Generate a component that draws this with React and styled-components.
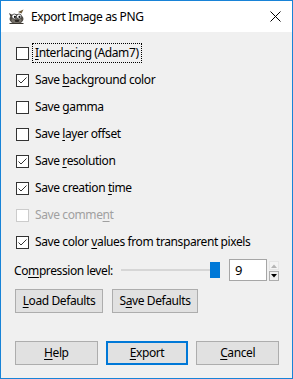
import React from "react";
import styled, { createGlobalStyle } from "styled-components";

const Global = createGlobalStyle`
  html, body { margin: 0; padding: 0; background: #fff; }
  body { font-family: "Noto Sans", "Segoe UI", sans-serif; font-size: 12px; letter-spacing: -0.4px; color: #000; }
  * { box-sizing: border-box; }
`;

const Window = styled.div`
  width: 293px;
  height: 379px;
  border: 1px solid #1883d7;
  background: #f0f0f0;
  display: flex;
  flex-direction: column;
`;

const TitleBar = styled.div`
  height: 31px;
  background: #fff;
  display: flex;
  align-items: center;
  padding: 0 10px 0 7px;
  flex: none;
`;

const TitleText = styled.div`
  margin-left: 6px;
  font-size: 12px;
  flex: 1;
  padding-bottom: 1px;
`;

const Close = styled.div`
  width: 12px;
  height: 12px;
  display: flex;
`;

const Body = styled.div`
  flex: 1;
  display: flex;
  flex-direction: column;
  padding: 10px 13px 13px 14px;
`;

const Options = styled.div`
  display: flex;
  flex-direction: column;
  gap: 5px;
`;

const Row = styled.label`
  height: 22px;
  display: flex;
  align-items: center;
  gap: 4px;
  color: ${p => (p.$disabled ? "#a0a0a0" : "#000")};
`;

const Box = styled.span`
  width: 13px;
  height: 13px;
  margin-left: 1px;
  border: 1px solid ${p => (p.$disabled ? "#cccccc" : "#333333")};
  background: #fff;
  display: flex;
  align-items: center;
  justify-content: center;
  flex: none;
`;

const Label = styled.span`
  padding: 1px 2px 2px 2px;
  outline: ${p => (p.$focus ? "1px dotted #000" : "none")};
  line-height: 15px;
`;

const Mn = styled.span`
  text-decoration: underline;
  text-underline-offset: 2px;
`;

const CompRow = styled.div`
  margin-top: 6px;
  height: 22px;
  display: flex;
  align-items: center;
`;

const CompLabel = styled.span`
  width: 107px;
  flex: none;
  margin-left: -1px;
`;

const Slider = styled.div`
  flex: 1;
  height: 16px;
  position: relative;
  display: flex;
  align-items: center;
  margin-right: 9px;
`;

const Track = styled.div`
  height: 2px;
  background: #d6d6d6;
  flex: 1;
`;

const Thumb = styled.div`
  position: absolute;
  right: 0;
  top: 0;
  width: 10px;
  height: 16px;
  background: #0078d7;
`;

const Spin = styled.div`
  display: flex;
  align-items: center;
  gap: 2px;
`;

const Entry = styled.div`
  width: 38px;
  height: 22px;
  border: 1px solid #a6a6a6;
  background: #fff;
  padding-left: 5px;
  display: flex;
  align-items: center;
  font-size: 13px;
`;

const Arrows = styled.div`
  display: flex;
  flex-direction: column;
  gap: 1px;
  padding-top: 2px;
`;

const ArrowBtn = styled.div`
  width: 10px;
  height: ${p => (p.$down ? "10px" : "9px")};
  border: 1px solid ${p => (p.$down ? "#adadad" : "#e6e6e6")};
  background: ${p => (p.$down ? "#f0f0f0" : "#f4f4f4")};
  display: flex;
  align-items: center;
  justify-content: center;
`;

const DefaultsRow = styled.div`
  margin-top: 8px;
  display: flex;
  gap: 9px;
`;

const Button = styled.div`
  height: 24px;
  width: ${p => p.$w || 83}px;
  background: #e1e1e1;
  border: ${p => (p.$default ? "2px solid #0078d7" : "1px solid #adadad")};
  display: flex;
  align-items: center;
  justify-content: center;
  padding-bottom: 1px;
`;

const Footer = styled.div`
  margin-top: auto;
  display: flex;
  gap: 8px;
`;

const Check = () => (
  <svg width="11" height="11" viewBox="0 0 11 11">
    <path d="M1.5 5.5 L4 8 L9.5 2.5" fill="none" stroke="#333" strokeWidth="1" />
  </svg>
);

const Wilber = () => (
  <svg width="17" height="16" viewBox="0 0 17 16">
    <path d="M10 3 L15.5 0.5 L13.5 4.5 Z" fill="#6b5a3a" />
    <path d="M1 4 L4.5 6 L3 9 Z" fill="#3f3b36" />
    <ellipse cx="8.5" cy="10" rx="7" ry="4.8" fill="#4e4a44" />
    <ellipse cx="8.5" cy="11.2" rx="5" ry="2.8" fill="#77726a" />
    <circle cx="6.3" cy="7.5" r="2.5" fill="#fff" stroke="#222" strokeWidth="0.7" />
    <circle cx="11" cy="7.5" r="2.5" fill="#fff" stroke="#222" strokeWidth="0.7" />
    <circle cx="6.9" cy="7.9" r="1.1" fill="#111" />
    <circle cx="11.5" cy="7.9" r="1.1" fill="#111" />
    <ellipse cx="9" cy="11.8" rx="2.3" ry="1.2" fill="#2a2622" />
    <path d="M1.5 14.5 L15.5 14.5" stroke="#3a3630" strokeWidth="1" />
  </svg>
);

const CloseIcon = () => (
  <svg width="11" height="11" viewBox="0 0 11 11">
    <path d="M0.5 0.5 L10.5 10.5 M10.5 0.5 L0.5 10.5" stroke="#000" strokeWidth="1" />
  </svg>
);

const options = [
  { pre: "", mn: "I", post: "nterlacing (Adam7)", checked: false, focus: true },
  { pre: "Save ", mn: "b", post: "ackground color", checked: true },
  { pre: "Save ", mn: "g", post: "amma", checked: false },
  { pre: "Save ", mn: "l", post: "ayer offset", checked: false },
  { pre: "Save ", mn: "r", post: "esolution", checked: true },
  { pre: "Save creation ", mn: "t", post: "ime", checked: true },
  { pre: "Save comme", mn: "n", post: "t", checked: false, disabled: true },
  { pre: "Save color ", mn: "v", post: "alues from transparent pixels", checked: true },
];

export default function App() {
  return (
    <>
      <Global />
      <Window>
        <TitleBar>
          <Wilber />
          <TitleText>Export Image as PNG</TitleText>
          <Close><CloseIcon /></Close>
        </TitleBar>
        <Body>
          <Options>
            {options.map((o, i) => (
              <Row key={i} $disabled={o.disabled}>
                <Box $disabled={o.disabled}>{o.checked && <Check />}</Box>
                <Label $focus={o.focus}>
                  {o.pre}
                  <Mn>{o.mn}</Mn>
                  {o.post}
                </Label>
              </Row>
            ))}
          </Options>
          <CompRow>
            <CompLabel>
              Co<Mn>m</Mn>pression level:
            </CompLabel>
            <Slider>
              <Track />
              <Thumb />
            </Slider>
            <Spin>
              <Entry>9</Entry>
              <Arrows>
                <ArrowBtn>
                  <svg width="6" height="4" viewBox="0 0 6 4"><path d="M0 4 L3 0.5 L6 4 Z" fill="#b5b5b5" /></svg>
                </ArrowBtn>
                <ArrowBtn $down>
                  <svg width="6" height="4" viewBox="0 0 6 4"><path d="M0 0 L3 3.5 L6 0 Z" fill="#000" /></svg>
                </ArrowBtn>
              </Arrows>
            </Spin>
          </CompRow>
          <DefaultsRow>
            <Button $w={88}><Mn>L</Mn>oad Defaults</Button>
            <Button $w={86}>S<Mn>a</Mn>ve Defaults</Button>
          </DefaultsRow>
          <Footer>
            <Button><Mn>H</Mn>elp</Button>
            <Button $default><Mn>E</Mn>xport</Button>
            <Button><Mn>C</Mn>ancel</Button>
          </Footer>
        </Body>
      </Window>
    </>
  );
}
